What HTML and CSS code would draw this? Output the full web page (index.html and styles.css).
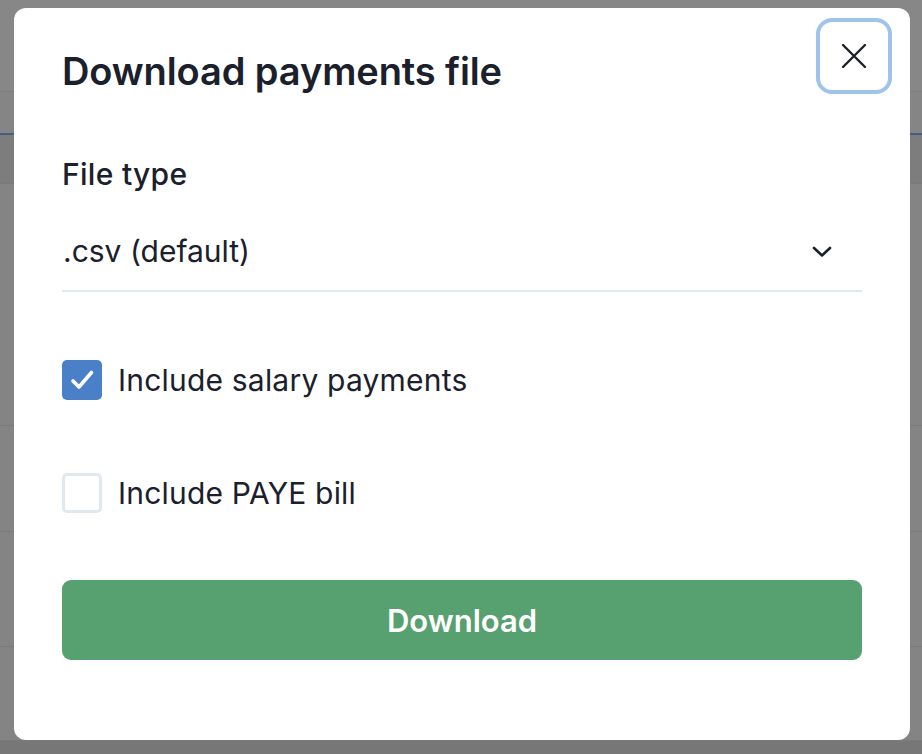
FILE: index.html
```html
<!DOCTYPE html>
<html lang="en">
<head>
<meta charset="utf-8">
<title>Download payments file</title>
<link rel="stylesheet" href="styles.css">
</head>
<body>
<div class="page">
  <div class="bg-top"></div>
  <div class="bg-band1"></div>
  <div class="bg-band2"></div>
  <div class="bg-row r1"></div>
  <div class="bg-row r2"></div>
  <div class="bg-row r3"></div>
  <div class="bg-row r4"></div>
  <div class="bg-bottom"></div>
</div>

<div class="modal" role="dialog" aria-labelledby="mtitle">
  <header class="modal-header">
    <h2 id="mtitle" class="modal-title">Download payments file</h2>
  </header>
  <button class="close-btn" aria-label="Close">
    <svg width="26" height="26" viewBox="0 0 26 26" fill="none" stroke="#1a202c" stroke-width="2.4" stroke-linecap="round">
      <path d="M2 2 L24 24 M24 2 L2 24"/>
    </svg>
  </button>
  <div class="modal-body">
    <div class="field">
      <label class="field-label">File type</label>
      <div class="select">
        <span class="select-value">.csv (default)</span>
        <svg class="chevron" width="20" height="12" viewBox="0 0 20 12" fill="none" stroke="#1a202c" stroke-width="2.6" stroke-linecap="round" stroke-linejoin="round">
          <path d="M2 2 L10 9.5 L18 2"/>
        </svg>
      </div>
    </div>
    <label class="check-row">
      <span class="box checked">
        <svg width="40" height="40" viewBox="0 0 40 40" fill="none" stroke="#fff" stroke-width="3.6" stroke-linecap="round" stroke-linejoin="round">
          <path d="M11 21 L17 27 L29.5 12.5"/>
        </svg>
      </span>
      <span class="check-text">Include salary payments</span>
    </label>
    <label class="check-row second">
      <span class="box"></span>
      <span class="check-text">Include PAYE bill</span>
    </label>
    <button class="download-btn">Download</button>
  </div>
</div>
</body>
</html>
```
FILE: styles.css
```css
html, body {
  margin: 0;
  padding: 0;
}
body {
  width: 922px;
  height: 754px;
  overflow: hidden;
  background: #848484;
  font-family: Inter, "Noto Sans", "Liberation Sans", sans-serif;
  position: relative;
}
.page {
  display: flex;
  flex-direction: column;
  height: 754px;
}
.bg-top {
  height: 91px;
  background: #878787;
  border-bottom: 1px solid #7e7e7e;
}
.bg-band1 {
  height: 41px;
  background: #858585;
  border-bottom: 2px solid #3f5f86;
}
.bg-band2 {
  height: 48px;
  background: #7d7d7d;
  border-bottom: 1px solid #7a7a7a;
}
.bg-row {
  background: #848484;
  border-bottom: 1px solid #7b7b7b;
}
.r1 { height: 241px; }
.r2 { height: 105px; }
.r3 { height: 114px; }
.r4 { height: 93px; }
.bg-bottom {
  flex: 1;
  background: #777777;
}

.modal {
  position: absolute;
  left: 14px;
  top: 8px;
  width: 896px;
  height: 732px;
  box-sizing: border-box;
  background: #ffffff;
  border-radius: 12px;
  padding: 0 48px;
  color: #1a202c;
}
.modal-header {
  padding-top: 40px;
}
.modal-title {
  margin: 0;
  font-size: 38px;
  line-height: 46px;
  font-weight: 600;
  letter-spacing: -0.1px;
}
.close-btn {
  position: absolute;
  left: 802px;
  top: 10px;
  width: 76px;
  height: 76px;
  box-sizing: border-box;
  border: 4.5px solid #a0c3ec;
  border-radius: 16px;
  background: #fff;
  display: flex;
  align-items: center;
  justify-content: center;
  padding: 0;
}
.modal-body {
  display: flex;
  flex-direction: column;
}
.field {
  display: flex;
  flex-direction: column;
  padding-top: 60px;
}
.field-label {
  font-size: 30px;
  line-height: 40px;
  font-weight: 500;
  letter-spacing: 0.3px;
}
.select {
  margin-top: 32px;
  height: 66px;
  box-sizing: border-box;
  border-bottom: 2px solid #e2e8f0;
  display: flex;
  align-items: flex-start;
  justify-content: space-between;
  padding-right: 30px;
}
.select-value {
  font-size: 30px;
  line-height: 40px;
  margin-left: 1px;
  margin-top: 5px;
}
.chevron {
  margin-top: 20px;
}
.check-row {
  display: flex;
  align-items: center;
  gap: 16px;
  margin-top: 68px;
  height: 40px;
}
.check-row.second {
  margin-top: 73px;
}
.box {
  width: 40px;
  height: 40px;
  box-sizing: border-box;
  border: 3px solid #e2e8f0;
  border-radius: 5px;
  display: flex;
  align-items: center;
  justify-content: center;
  flex: none;
}
.box.checked {
  background: #4a80c8;
  border: none;
}
.check-text {
  font-size: 30px;
  line-height: 40px;
  letter-spacing: 0.2px;
}
.download-btn {
  margin-top: 67px;
  height: 80px;
  width: 100%;
  border: none;
  border-radius: 9px;
  background: #57a06f;
  color: #fff;
  font-family: inherit;
  font-size: 31px;
  font-weight: 600;
}
```
